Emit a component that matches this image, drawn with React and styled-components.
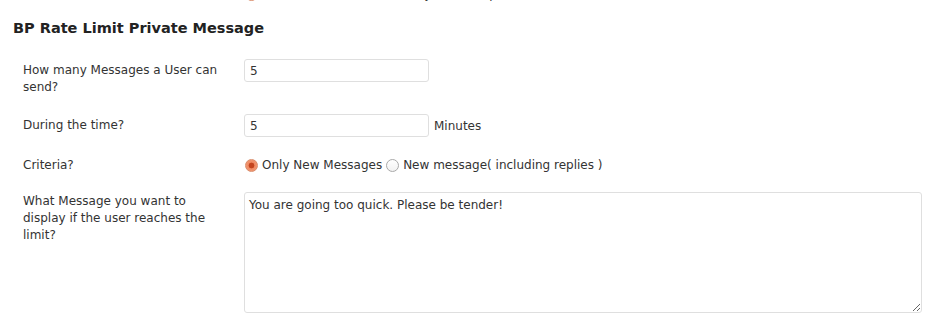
import React, { useState } from 'react';
import styled, { createGlobalStyle } from 'styled-components';

const GlobalStyle = createGlobalStyle`
  html, body {
    margin: 0;
    padding: 0;
    background: #fff;
  }
  body {
    font-family: "DejaVu Sans", "Noto Sans", sans-serif;
    font-size: 12px;
    color: #333;
    overflow: hidden;
  }
`;

const Wrap = styled.div`
  padding: 0 12px 0 13px;
  margin-top: -14px;
`;

const Heading = styled.h3`
  margin: 15px 0 0;
  padding: 0;
  font-size: 14.5px;
  font-weight: bold;
  color: #222;
  line-height: 20px;
`;

const FormTable = styled.div`
  display: flex;
  flex-direction: column;
  margin-top: ${(p) => p.top || 0}px;
`;

const Row = styled.div`
  display: grid;
  grid-template-columns: 221px 1fr;
  padding-left: 10px;
  margin-bottom: ${(p) => p.gap || 0}px;
`;

const Label = styled.div`
  line-height: 17px;
  padding-top: ${(p) => p.top || 0}px;
  padding-right: 16px;
  color: #333;
`;

const Field = styled.div`
  display: flex;
  align-items: center;
  gap: 5px;
  align-self: start;
`;

const TextInput = styled.input`
  width: 185px;
  height: 23px;
  box-sizing: border-box;
  border: 1px solid #dfdfdf;
  border-radius: 3px;
  padding: 0 5px;
  font: inherit;
  color: #333;
  background: #fff;
  outline: none;
`;

const Suffix = styled.span`
  color: #333;
`;

const RadioGroup = styled.div`
  display: flex;
  align-items: center;
  line-height: 17px;
  height: 17px;
  white-space: nowrap;
`;

const RadioLabel = styled.label`
  display: inline-flex;
  align-items: center;
  gap: 4px;
  margin-right: 3px;
  color: #333;
`;

const Radio = styled.input.attrs({ type: 'radio' })`
  appearance: none;
  margin: 0 0 0 1px;
  width: 13px;
  height: 13px;
  border-radius: 50%;
  box-sizing: border-box;
  border: 1px solid ${(p) => (p.checked ? '#d98c6a' : '#a9a9a9')};
  background: ${(p) =>
    p.checked
      ? 'radial-gradient(circle, #c4441e 0 2.6px, #ef8a63 3.2px, #f4a07c 100%)'
      : 'linear-gradient(#fff, #f2f2f2)'};
`;

const TextArea = styled.textarea`
  width: 678px;
  height: 121px;
  box-sizing: border-box;
  border: 1px solid #dfdfdf;
  border-radius: 3px;
  padding: 4px 4px;
  font: inherit;
  line-height: 17px;
  color: #333;
  resize: both;
  outline: none;
`;

const App = () => {
  const [scope, setScope] = useState(true);
  const [count, setCount] = useState('5');
  const [minutes, setMinutes] = useState('5');
  const [criteria, setCriteria] = useState('new');
  const [message, setMessage] = useState('You are going too quick. Please be tender!');

  return (
    <Wrap>
      <GlobalStyle />
      {/* tail of the previous settings section, scrolled mostly out of view */}
      <FormTable>
        <Row>
          <Label />
          <RadioGroup>
            <RadioLabel>
              <Radio name="scope" checked={scope} onChange={() => setScope(true)} />
              Enable the limit for users by default up to
            </RadioLabel>
          </RadioGroup>
        </Row>
      </FormTable>
      <Heading>BP Rate Limit Private Message</Heading>
      <FormTable top={21}>
        <Row gap={18}>
          <Label top={3}>How many Messages a User can send?</Label>
          <Field>
            <TextInput value={count} onChange={(e) => setCount(e.target.value)} />
          </Field>
        </Row>
        <Row gap={20}>
          <Label top={3}>During the time?</Label>
          <Field>
            <TextInput value={minutes} onChange={(e) => setMinutes(e.target.value)} />
            <Suffix>Minutes</Suffix>
          </Field>
        </Row>
        <Row gap={18}>
          <Label>Criteria?</Label>
          <RadioGroup>
            <RadioLabel>
              <Radio
                name="criteria"
                checked={criteria === 'new'}
                onChange={() => setCriteria('new')}
              />
              Only New Messages
            </RadioLabel>
            <RadioLabel>
              <Radio
                name="criteria"
                checked={criteria === 'all'}
                onChange={() => setCriteria('all')}
              />
              New message( including replies )
            </RadioLabel>
          </RadioGroup>
        </Row>
        <Row>
          <Label top={1}>What Message you want to display if the user reaches the limit?</Label>
          <Field>
            <TextArea value={message} onChange={(e) => setMessage(e.target.value)} />
          </Field>
        </Row>
      </FormTable>
    </Wrap>
  );
};

export default App;
